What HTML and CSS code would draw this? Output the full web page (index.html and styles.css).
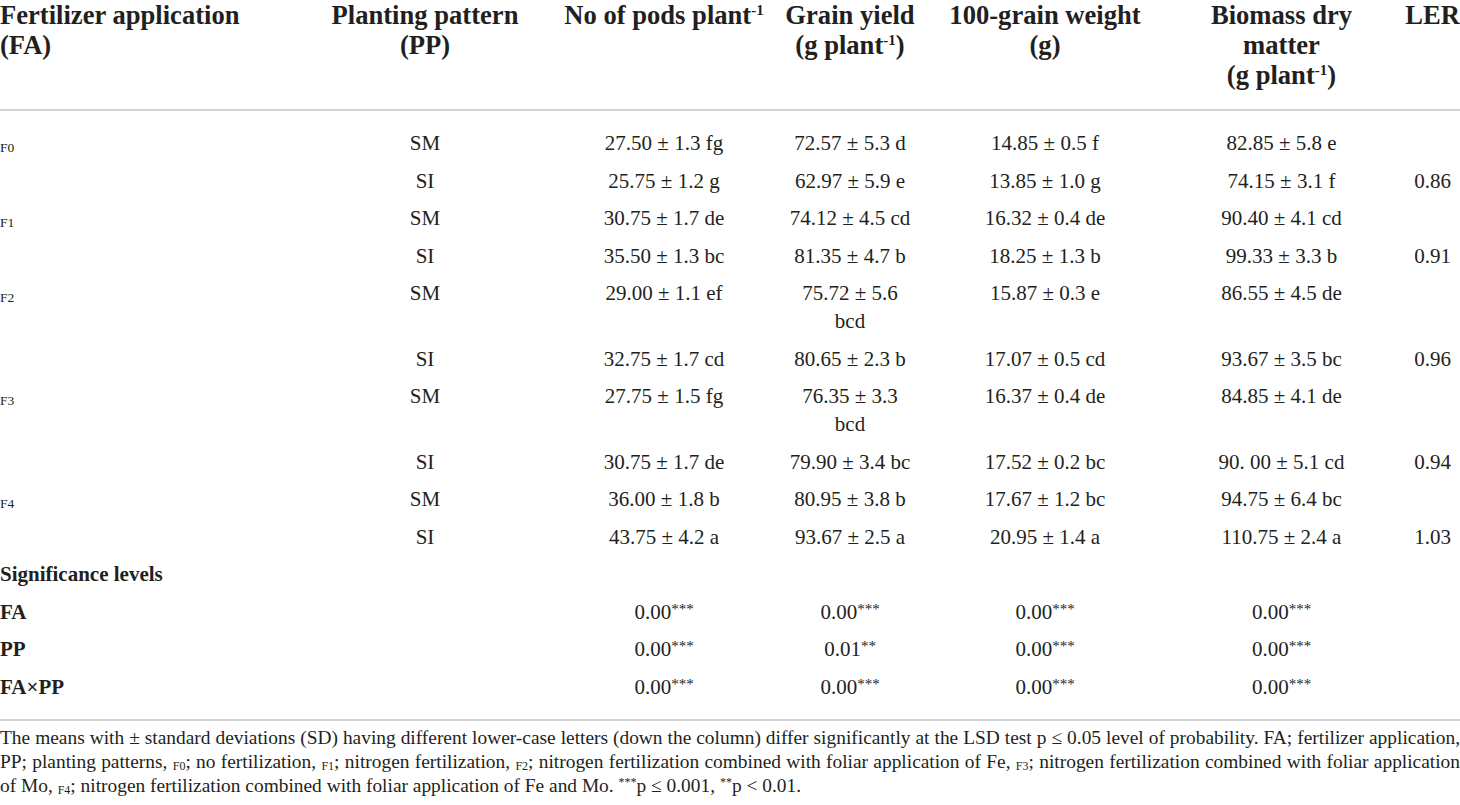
FILE: index.html
```html
<!DOCTYPE html>
<html lang="en">
<head>
<meta charset="utf-8">
<title>Table</title>
<link rel="stylesheet" href="styles.css">
</head>
<body>
<div class="page">
<table class="data">
  <colgroup>
    <col class="c1"><col class="c2"><col class="c3"><col class="c4"><col class="c5"><col class="c6"><col class="c7">
  </colgroup>
  <thead>
    <tr>
      <th class="left">Fertilizer application<br>(FA)</th>
      <th>Planting pattern<br>(PP)</th>
      <th>No of pods plant<sup>-1</sup></th>
      <th>Grain yield<br>(g plant<sup>-1</sup>)</th>
      <th>100-grain weight<br>(g)</th>
      <th>Biomass dry<br>matter<br>(g plant<sup>-1</sup>)</th>
      <th>LER</th>
    </tr>
  </thead>
  <tbody>
    <tr class="first"><td class="left"><sub class="f">F0</sub></td><td>SM</td><td>27.50 ± 1.3 fg</td><td>72.57 ± 5.3 d</td><td>14.85 ± 0.5 f</td><td>82.85 ± 5.8 e</td><td></td></tr>
    <tr><td></td><td>SI</td><td>25.75 ± 1.2 g</td><td>62.97 ± 5.9 e</td><td>13.85 ± 1.0 g</td><td>74.15 ± 3.1 f</td><td>0.86</td></tr>
    <tr><td class="left"><sub class="f">F1</sub></td><td>SM</td><td>30.75 ± 1.7 de</td><td>74.12 ± 4.5 cd</td><td>16.32 ± 0.4 de</td><td>90.40 ± 4.1 cd</td><td></td></tr>
    <tr><td></td><td>SI</td><td>35.50 ± 1.3 bc</td><td>81.35 ± 4.7 b</td><td>18.25 ± 1.3 b</td><td>99.33 ± 3.3 b</td><td>0.91</td></tr>
    <tr><td class="left"><sub class="f">F2</sub></td><td>SM</td><td>29.00 ± 1.1 ef</td><td>75.72 ± 5.6<br>bcd</td><td>15.87 ± 0.3 e</td><td>86.55 ± 4.5 de</td><td></td></tr>
    <tr><td></td><td>SI</td><td>32.75 ± 1.7 cd</td><td>80.65 ± 2.3 b</td><td>17.07 ± 0.5 cd</td><td>93.67 ± 3.5 bc</td><td>0.96</td></tr>
    <tr><td class="left"><sub class="f">F3</sub></td><td>SM</td><td>27.75 ± 1.5 fg</td><td>76.35 ± 3.3<br>bcd</td><td>16.37 ± 0.4 de</td><td>84.85 ± 4.1 de</td><td></td></tr>
    <tr><td></td><td>SI</td><td>30.75 ± 1.7 de</td><td>79.90 ± 3.4 bc</td><td>17.52 ± 0.2 bc</td><td>90. 00 ± 5.1 cd</td><td>0.94</td></tr>
    <tr><td class="left"><sub class="f">F4</sub></td><td>SM</td><td>36.00 ± 1.8 b</td><td>80.95 ± 3.8 b</td><td>17.67 ± 1.2 bc</td><td>94.75 ± 6.4 bc</td><td></td></tr>
    <tr><td></td><td>SI</td><td>43.75 ± 4.2 a</td><td>93.67 ± 2.5 a</td><td>20.95 ± 1.4 a</td><td>110.75 ± 2.4 a</td><td>1.03</td></tr>
    <tr><td class="left strong" colspan="2">Significance levels</td><td></td><td></td><td></td><td></td><td></td></tr>
    <tr><td class="left strong">FA</td><td></td><td>0.00<span class="st">***</span></td><td>0.00<span class="st">***</span></td><td>0.00<span class="st">***</span></td><td>0.00<span class="st">***</span></td><td></td></tr>
    <tr><td class="left strong">PP</td><td></td><td>0.00<span class="st">***</span></td><td>0.01<span class="st">**</span></td><td>0.00<span class="st">***</span></td><td>0.00<span class="st">***</span></td><td></td></tr>
    <tr class="last"><td class="left strong">FA×PP</td><td></td><td>0.00<span class="st">***</span></td><td>0.00<span class="st">***</span></td><td>0.00<span class="st">***</span></td><td>0.00<span class="st">***</span></td><td></td></tr>
  </tbody>
</table>
<p class="note">The means with ± standard deviations (SD) having different lower-case letters (down the column) differ significantly at the LSD test p ≤ 0.05 level of probability. FA; fertilizer application, PP; planting patterns, <sub>F0</sub>; no fertilization, <sub>F1</sub>; nitrogen fertilization, <sub>F2</sub>; nitrogen fertilization combined with foliar application of Fe, <sub>F3</sub>; nitrogen fertilization combined with foliar application of Mo, <sub>F4</sub>; nitrogen fertilization combined with foliar application of Fe and Mo. <sup>***</sup>p ≤ 0.001, <sup>**</sup>p &lt; 0.01.</p>
</div>
</body>
</html>
```

FILE: styles.css
```css
html, body {
  margin: 0;
  padding: 0;
  background: #ffffff;
}

.page {
  width: 1460px;
  color: #231f20;
  font-family: "Liberation Serif", "Times New Roman", serif;
}

.data {
  width: 1460px;
  border-collapse: collapse;
  table-layout: fixed;
}

.c1 { width: 290px; }
.c2 { width: 270px; }
.c3 { width: 208px; }
.c4 { width: 164px; }
.c5 { width: 226px; }
.c6 { width: 247px; }
.c7 { width: 55px; }

.data th {
  font-size: 26.6px;
  font-weight: bold;
  line-height: 30px;
  text-align: center;
  vertical-align: top;
  white-space: nowrap;
  padding: 0 0 19px 0;
  border-bottom: 2px solid #d4d4d4;
}

.data th sup {
  font-size: 15px;
  line-height: 0;
  vertical-align: 9px;
}

.data td {
  font-size: 21px;
  line-height: 28px;
  text-align: center;
  vertical-align: top;
  white-space: nowrap;
  padding: 4.75px 0;
}

.data .left {
  text-align: left;
}

.data td.strong {
  font-weight: bold;
}

.data tr.first td {
  padding-top: 18px;
}

.data tr.last td {
  padding-bottom: 18px;
}

.f {
  font-size: 13.5px;
  line-height: 0;
  vertical-align: -2px;
}

.st {
  font-size: 15px;
  line-height: 0;
  vertical-align: 5px;
}

.note {
  margin: 0;
  border-top: 2px solid #d4d4d4;
  padding-top: 5px;
  font-size: 19.4px;
  line-height: 24px;
  text-align: justify;
}

.note sub {
  font-size: 12px;
  line-height: 0;
  vertical-align: -2px;
}

.note sup {
  font-size: 12px;
  line-height: 0;
  vertical-align: 6px;
}
```
